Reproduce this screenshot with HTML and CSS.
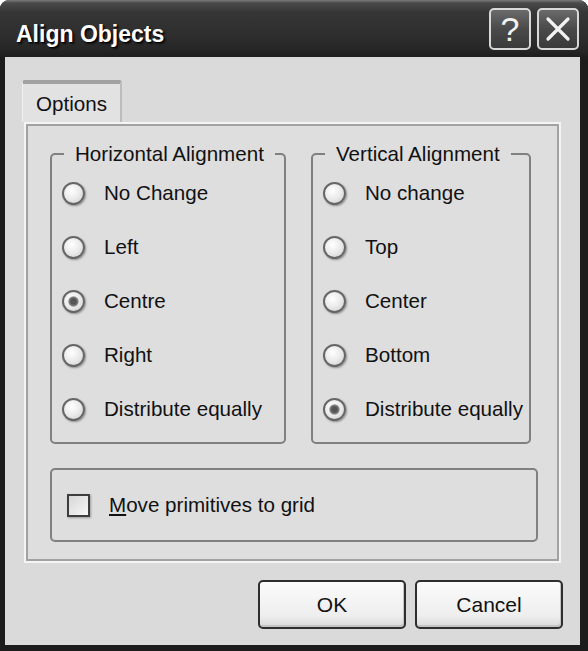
FILE: index.html
```html
<!DOCTYPE html>
<html lang="en">
  <head>
    <meta charset="UTF-8" />
    <title>Align Objects</title>
    <link rel="stylesheet" href="styles.css">
  </head>
  <body>
    <div class="window">
      <div class="titlebar">
        <span class="title">Align Objects</span>
        <div class="title_buttons">
          <span class="title_button help">?</span>
          <span class="title_button close">
            <svg width="26" height="26" viewBox="0 0 26 26">
              <path d="M3 3 L23 23 M23 3 L3 23" stroke="#f2f2f2" stroke-width="3.2" stroke-linecap="round" fill="none" />
            </svg>
          </span>
        </div>
      </div>
      <div class="client">
        <div class="tab">Options</div>
        <div class="panel">
          <div class="groups">
            <fieldset class="group group_left">
              <legend>Horizontal Alignment</legend>
              <label class="option"><span class="radio"></span>No Change</label>
              <label class="option"><span class="radio"></span>Left</label>
              <label class="option"><span class="radio checked"></span>Centre</label>
              <label class="option"><span class="radio"></span>Right</label>
              <label class="option"><span class="radio"></span>Distribute equally</label>
            </fieldset>
            <fieldset class="group group_right">
              <legend>Vertical Alignment</legend>
              <label class="option"><span class="radio"></span>No change</label>
              <label class="option"><span class="radio"></span>Top</label>
              <label class="option"><span class="radio"></span>Center</label>
              <label class="option"><span class="radio"></span>Bottom</label>
              <label class="option"><span class="radio checked"></span>Distribute equally</label>
            </fieldset>
          </div>
          <div class="grid_box">
            <label class="option"><span class="checkbox"></span><span><u>M</u>ove primitives to grid</span></label>
          </div>
        </div>
        <div class="buttons">
          <button class="push_button">OK</button>
          <button class="push_button">Cancel</button>
        </div>
      </div>
    </div>
  </body>
</html>
```

FILE: styles.css
```css
* {
  box-sizing: border-box;
}
body {
  margin: 0;
  background: #ffffff;
  font-family: "Liberation Sans", Arial, sans-serif;
  font-size: 20.6px;
  color: #111111;
}
.window {
  width: 588px;
  height: 651px;
  background: #1c1c1c;
  border-radius: 9px 9px 0 0;
  padding: 0 8px 6px 5px;
  display: flex;
  flex-direction: column;
}
.titlebar {
  height: 57px;
  margin: 0 -8px 0 -5px;
  padding: 0 9px 0 16px;
  display: flex;
  justify-content: space-between;
  align-items: flex-start;
  border-radius: 9px 9px 0 0;
  background: linear-gradient(#7a7a7a 0, #4a4a4a 3px, #363636 12px, #2e2e2e 35px, #262626 50px, #1d1d1d 57px);
}
.title {
  margin-top: 21px;
  line-height: 26px;
  font-size: 23px;
  font-weight: bold;
  color: #ffffff;
  text-shadow: 1px 1px 1px #000000, 2px 2px 2px #111111;
}
.title_buttons {
  display: flex;
  gap: 6px;
  margin-top: 8px;
}
.title_button {
  width: 42px;
  height: 42px;
  border: 2px solid #d8d8d8;
  border-radius: 5px;
  background: linear-gradient(#6a6a6a, #4a4a4a 50%, #3a3a3a);
  display: flex;
  align-items: center;
  justify-content: center;
  color: #f2f2f2;
}
.help {
  font-size: 34px;
  line-height: 1;
}
.client {
  flex: 1;
  background: #dadada;
  padding: 23px 17px 16px 19px;
  display: flex;
  flex-direction: column;
}
.tab {
  align-self: flex-start;
  margin-left: -2px;
  height: 42px;
  padding: 8px 13px 0 13px;
  line-height: 24px;
  background: #e2e2e2;
  border-top: 4px solid #a2a2a2;
  border-left: 1px solid #f0f0f0;
  border-right: 2px solid #bcbcbc;
  border-radius: 3px 3px 0 0;
}
.panel {
  height: 441px;
  margin-right: 2px;
  background: #dedede;
  border: 2px solid #f4f4f4;
  box-shadow: inset 0 0 0 2px #a2a2a2;
  padding: 18px 21px 18px 24px;
}
.groups {
  display: flex;
  gap: 25px;
}
.group {
  margin: 0;
  padding: 0 0 6px 10px;
  border: 2px solid #808080;
  border-radius: 5px;
}
.group_left {
  width: 236px;
}
.group_right {
  width: 220px;
}
legend {
  margin-left: 2px;
  padding: 0 11px;
  line-height: 24px;
}
.option {
  height: 54px;
  display: flex;
  align-items: center;
  gap: 19px;
  white-space: nowrap;
}
.radio {
  position: relative;
  width: 23px;
  height: 23px;
  flex: none;
  border: 2px solid #666666;
  border-radius: 50%;
  background: radial-gradient(circle at 40% 35%, #ffffff, #e8e8e8 55%, #c8c8c8);
  box-shadow: 1px 1px 2px rgba(0, 0, 0, 0.35);
}
.radio.checked::after {
  content: "";
  position: absolute;
  left: 4px;
  top: 4px;
  width: 11px;
  height: 11px;
  border-radius: 50%;
  background: radial-gradient(circle, #555555 35%, #8a8a8a 60%, #f4f4f4 75%);
}
.grid_box {
  margin-top: 24px;
  height: 74px;
  border: 2px solid #808080;
  border-radius: 5px;
  padding-left: 15px;
  display: flex;
  align-items: center;
}
.grid_box .option {
  height: auto;
}
.checkbox {
  width: 23px;
  height: 23px;
  border: 2px solid #3e3e3e;
  background: linear-gradient(135deg, #d6d6d6, #f8f8f8);
  box-shadow: 1px 1px 2px rgba(0, 0, 0, 0.3);
}
.buttons {
  margin-top: 17px;
  display: flex;
  justify-content: flex-end;
  gap: 9px;
}
.push_button {
  width: 148px;
  height: 49px;
  font-family: inherit;
  font-size: 21px;
  color: #111111;
  border: 2px solid #2e2e2e;
  border-radius: 5px;
  background: linear-gradient(#fbfbfb, #eeeeee 75%, #dadada);
  box-shadow: inset -1px -2px 0 #c4c4c4;
  padding: 0;
}
```
